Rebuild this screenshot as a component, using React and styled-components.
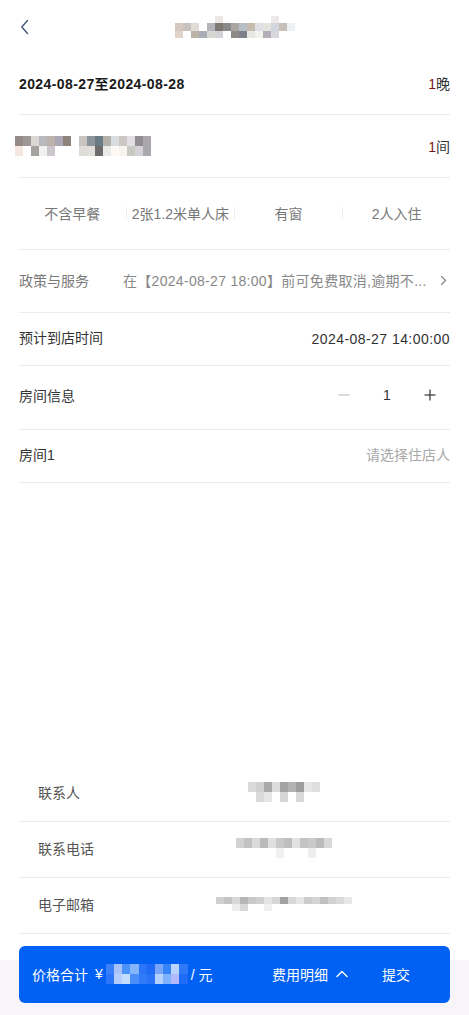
import React from "react";
import styled, { createGlobalStyle } from "styled-components";

const Global = createGlobalStyle`
  html, body { margin: 0; padding: 0; background: #fff; }
  body {
    font-family: "Liberation Sans", "Noto Sans CJK SC", sans-serif;
    font-size: 14px;
    color: #333;
    -webkit-font-smoothing: antialiased;
  }
  * { box-sizing: border-box; }
`;

const Page = styled.div`
  min-height: 100vh;
  display: flex;
  flex-direction: column;
  width: 469px;
`;

const Header = styled.header`
  height: 54px;
  display: grid;
  grid-template-columns: 1fr auto 1fr;
  align-items: center;
  padding: 0 19px;
`;

const BackBtn = styled.button`
  justify-self: start;
  width: 14px;
  height: 20px;
  padding: 0;
  border: 0;
  background: none;
  display: flex;
  align-items: center;
  margin-left: 1px;
`;

const Body = styled.div`
  padding: 0 19px;
  display: flex;
  flex-direction: column;
`;

const Row = styled.div`
  height: ${(p) => p.$h}px;
  border-bottom: 1px solid #ebebeb;
  display: flex;
  align-items: center;
  justify-content: space-between;
  padding-bottom: ${(p) => p.$pb || 0}px;
`;

const DateText = styled.span`
  font-weight: 700;
  color: #1a1a1a;
  letter-spacing: 0.4px;
`;

const Count = styled.span`
  color: #333;
`;

const Red = styled.span`
  color: #7a1414;
`;

const Label = styled.span`
  color: ${(p) => p.$muted ? "#7a7a7a" : "#333"};
  flex-shrink: 0;
  width: ${(p) => p.$w ? `${p.$w}px` : "auto"};
`;

const Value = styled.span`
  color: ${(p) => p.$c || "#333"};
  letter-spacing: ${(p) => p.$ls || 0}px;
  white-space: nowrap;
  margin-top: ${(p) => p.$mt || 0}px;
`;

const PolicyValue = styled.span`
  flex: 1;
  color: #888;
  white-space: nowrap;
  overflow: hidden;
  letter-spacing: 0.3px;
`;

const Chevron = styled.span`
  display: flex;
  align-items: center;
  margin-left: 8px;
  margin-right: 3px;
`;

const Tags = styled.div`
  flex: 1;
  display: flex;
  align-items: center;
`;

const Tag = styled.span`
  flex: 1;
  text-align: center;
  color: #777;
  white-space: nowrap;
`;

const TagSep = styled.span`
  width: 1.5px;
  height: 12px;
  background: #efefef;
  flex-shrink: 0;
`;

const Stepper = styled.div`
  display: flex;
  align-items: center;
  margin-right: 13px;
`;

const StepBtn = styled.span`
  display: flex;
  align-items: center;
  justify-content: center;
  width: 14px;
  height: 14px;
`;

const StepNum = styled.span`
  width: 72px;
  text-align: center;
  color: #333;
`;

const Spacer = styled.div`
  flex: 1;
`;

const ContactRow = styled.div`
  height: 56px;
  border-bottom: 1px solid #ebebeb;
  display: flex;
  align-items: center;
  padding-left: 19px;
  padding-bottom: 4px;
`;

const ContactLabel = styled.span`
  width: 80px;
  color: #555;
  flex-shrink: 0;
`;

const ContactValue = styled.div`
  flex: 1;
  display: flex;
  justify-content: center;
`;

const Footer = styled.footer`
  padding: 12px 19px 12px;
  background: linear-gradient(#fff 0 26px, #f7f5fa 26px);
`;

const Bar = styled.div`
  height: 57px;
  border-radius: 6px;
  background: #0061f4;
  display: flex;
  align-items: center;
  padding: 0 40px 2px 13px;
  color: #fff;
`;

const PriceLabel = styled.span`
  display: flex;
  align-items: center;
  white-space: nowrap;
`;

const Yen = styled.span`
  margin: 0 3px 0 7px;
`;

const Unit = styled.span`
  margin-left: 3px;
`;

const Detail = styled.span`
  margin-left: auto;
  display: flex;
  align-items: center;
  gap: 8px;
`;

const Submit = styled.span`
  margin-left: 34px;
`;

const MosaicGrid = styled.div`
  display: grid;
  grid-template-columns: repeat(${(p) => p.$cols}, ${(p) => p.$cw}px);
  grid-auto-rows: ${(p) => p.$ch}px;
  margin-left: ${(p) => p.$ml || 0}px;
`;

const Cell = styled.span`
  background: ${(p) => p.$c || "transparent"};
`;

function Mosaic({ rows, cw = 8, ch = 10, ml }) {
  const cols = rows[0].length;
  return (
    <MosaicGrid $cols={cols} $cw={cw} $ch={ch} $ml={ml} aria-hidden="true">
      {rows.flatMap((r, i) =>
        r.map((c, j) => <Cell key={`${i}-${j}`} $c={c || undefined} />)
      )}
    </MosaicGrid>
  );
}

const T = null;

const titleRows = [
  [T, T, T, T, T, "#ece6e6", T, T, T, T, T, T, "#eee8ea", T, T],
  ["#d6c9c0", "#c9c2bd", "#e2dcd6", T, "#b5b5b9", "#7f7873", "#8a8a8d", "#a9a6a2", "#b6bec6", "#c7bbad", "#dfe0e4", "#e3e3dd", "#d4d6de", "#c7c0b8", "#eef1f4"],
  ["#e0d4c9", T, "#bcb2a6", "#a9aeb6", "#d6d6d2", "#d1d3d7", T, "#8d8a86", "#7d8088", "#e6e6e3", "#f1f1ee", "#b4acb6", "#d8d8dc", T, T],
];

const roomRows = [
  ["#958b88", "#a09896", "#dbd7d2", "#b7b9bd", "#bdb3ad", "#aca7b4", "#8e847c", T, "#c9c4bf", "#8d959c", "#6b7b86", "#b6b0aa", "#d9dde0", "#cdc7c4", "#e1dfe4", "#908c92", "#aaa8ad"],
  ["#f3e7df", T, "#a5a3a0", "#f2f1f0", "#cbc7cc", T, T, T, "#dfddd9", "#e2e0dd", "#6f6d6b", "#e9e9e8", "#fdf9f6", "#f7f3ef", "#c7cac3", "#d4d2d8", "#a7a9ad"],
];

const nameRows = [
  ["#dadada", "#d0d0d0", "#a9a9a9", "#dcdcdc", "#a3a3a3", "#b2b2b2", "#9c9c9c", "#e6e6e6", "#dedede"],
  [T, "#dadada", "#e6e6e6", T, "#d5d5d5", T, "#d8d8d8", T, T],
];

const phoneRows = [
  ["#d2d2d2", "#c2c2c2", "#dadada", "#bababa", "#e0e0e0", "#c9c9c9", "#bebebe", "#e2e2e2", "#c4c4c4", "#cacaca", "#bababa", "#d8d8d8"],
  [T, T, T, T, T, "#f0f0f0", T, T, T, "#eeeeee", T, T],
];

const mailRows = [
  ["#cfcfcf", "#c4c4c4", "#d8d8d8", "#b6b6b6", "#c8c8c8", "#d0d0d0", "#e4e4e4", "#d6d6d6", "#a2a2a2", "#d8d8d8", "#e6e6e6", "#cccccc", "#d4d4d4", "#c0c0c0", "#d2d2d2", "#dadada", "#e8e8e8"],
  [T, T, "#ececec", "#d8d8d8", T, T, "#f0f0f0", T, T, T, T, T, T, T, T, T, T],
];

const priceRows = [
  ["#3a80f8", "#a9c1fb", "#4c92fb", "#85b5fc", "#2c74f7", "#1e6af6", "#7aa4fc", "#3784f9", "#b8d4fd", "#2f78f7"],
  ["#2b75f8", "#b3cefc", "#c5defe", "#4a8ffa", "#2f7bf8", "#2a72f7", "#b4d2fd", "#7fb2fc", "#b1b8fb", "#1f6cf6"],
];

function BackIcon() {
  return (
    <svg width="10" height="16" viewBox="0 0 10 16">
      <polyline points="7.5,1.5 1.8,8 7.5,14.5" fill="none" stroke="#3f5470" strokeWidth="1.3" strokeLinecap="round" strokeLinejoin="round" />
    </svg>
  );
}

function RightChevron() {
  return (
    <svg width="7" height="11" viewBox="0 0 7 11">
      <polyline points="1.5,1.5 5.5,5.5 1.5,9.5" fill="none" stroke="#888" strokeWidth="1.2" strokeLinecap="round" strokeLinejoin="round" />
    </svg>
  );
}

function UpChevron() {
  return (
    <svg width="12" height="8" viewBox="0 0 12 8">
      <polyline points="1,6.5 6,1.5 11,6.5" fill="none" stroke="#fff" strokeWidth="1.4" strokeLinecap="round" strokeLinejoin="round" />
    </svg>
  );
}

function Minus() {
  return (
    <svg width="12" height="12" viewBox="0 0 12 12">
      <line x1="0.5" y1="6" x2="11.5" y2="6" stroke="#c4c4c4" strokeWidth="1.2" />
    </svg>
  );
}

function Plus() {
  return (
    <svg width="12" height="12" viewBox="0 0 12 12">
      <line x1="0.5" y1="6" x2="11.5" y2="6" stroke="#333" strokeWidth="1.2" />
      <line x1="6" y1="0.5" x2="6" y2="11.5" stroke="#333" strokeWidth="1.2" />
    </svg>
  );
}

export default function App() {
  return (
    <>
      <Global />
      <Page>
        <Header>
          <BackBtn aria-label="返回">
            <BackIcon />
          </BackBtn>
          <Mosaic rows={titleRows} cw={8} ch={7.5} />
          <span />
        </Header>

        <Body>
          <Row $h={61} $pb={2}>
            <DateText>2024-08-27至2024-08-28</DateText>
            <Count><Red>1</Red>晚</Count>
          </Row>
          <Row $h={63} $pb={1}>
            <Mosaic rows={roomRows} cw={8} ch={10} ml={-4} />
            <Count><Red>1</Red>间</Count>
          </Row>
          <Row $h={72} $pb={1}>
            <Tags>
              <Tag>不含早餐</Tag>
              <TagSep />
              <Tag>2张1.2米单人床</Tag>
              <TagSep />
              <Tag>有窗</Tag>
              <TagSep />
              <Tag>2人入住</Tag>
            </Tags>
          </Row>
          <Row $h={63} $pb={2}>
            <Label $muted $w={104}>政策与服务</Label>
            <PolicyValue>在【2024-08-27 18:00】前可免费取消,逾期不...</PolicyValue>
            <Chevron><RightChevron /></Chevron>
          </Row>
          <Row $h={53} $pb={5}>
            <Label>预计到店时间</Label>
            <Value $ls={0.45} $mt={4}>2024-08-27 14:00:00</Value>
          </Row>
          <Row $h={64} $pb={5}>
            <Label>房间信息</Label>
            <Stepper>
              <StepBtn><Minus /></StepBtn>
              <StepNum>1</StepNum>
              <StepBtn><Plus /></StepBtn>
            </Stepper>
          </Row>
          <Row $h={53} $pb={4}>
            <Label>房间1</Label>
            <Value $c="#a8a8a8">请选择住店人</Value>
          </Row>
        </Body>

        <Spacer />

        <Body>
          <ContactRow>
            <ContactLabel>联系人</ContactLabel>
            <ContactValue><Mosaic rows={nameRows} cw={8} ch={10} /></ContactValue>
          </ContactRow>
          <ContactRow>
            <ContactLabel>联系电话</ContactLabel>
            <ContactValue><Mosaic rows={phoneRows} cw={8} ch={10} /></ContactValue>
          </ContactRow>
          <ContactRow>
            <ContactLabel>电子邮箱</ContactLabel>
            <ContactValue><Mosaic rows={mailRows} cw={8} ch={7} /></ContactValue>
          </ContactRow>
        </Body>

        <Footer>
          <Bar>
            <PriceLabel>
              价格合计<Yen>¥</Yen>
              <Mosaic rows={priceRows} cw={8.2} ch={10} />
              <Unit>/ 元</Unit>
            </PriceLabel>
            <Detail>费用明细<UpChevron /></Detail>
            <Submit>提交</Submit>
          </Bar>
        </Footer>
      </Page>
    </>
  );
}
